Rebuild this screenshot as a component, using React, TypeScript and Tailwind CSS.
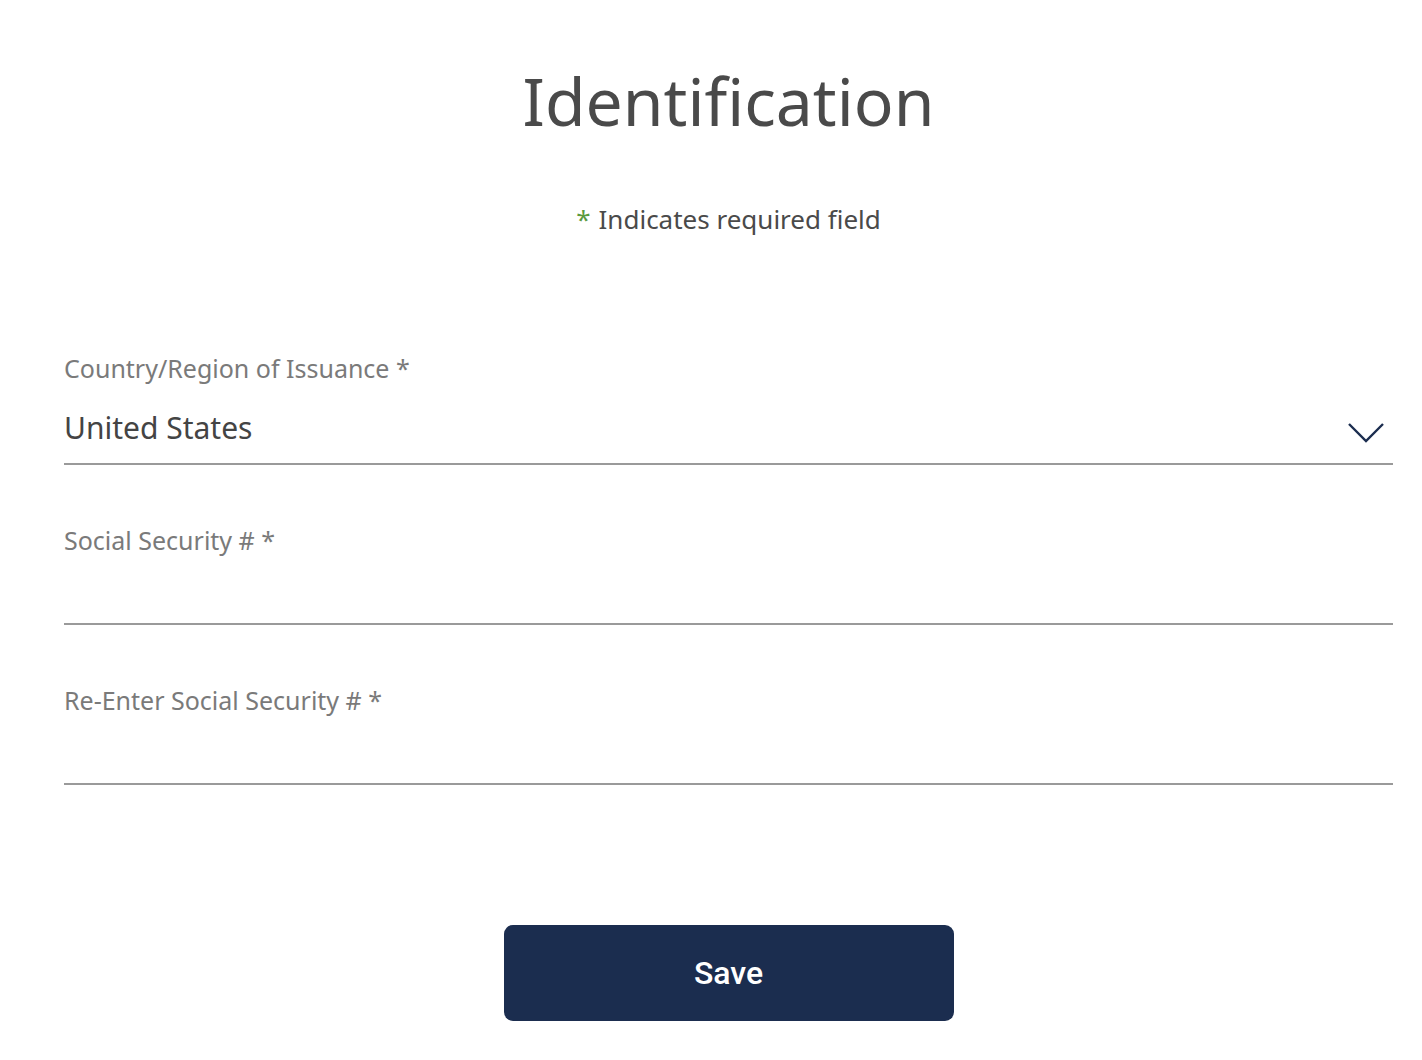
import React from 'react';

const font = { fontFamily: '"Noto Sans", "Open Sans", sans-serif' };

const Field: React.FC<{ label: string; value?: string; select?: boolean }> = ({ label, value, select }) => (
  <div className="border-b-2 border-[#9a9a9a]">
    <label className="block text-[25px] leading-[34px] text-[#7a7a7a]">{label}</label>
    <div className={`flex items-center justify-between pt-[6px] ${select ? 'h-[78px]' : 'h-[66px]'}`}>
      <span className="text-[30px] text-[#444444]">{value}</span>
      {select && (
        <svg width="38" height="22" viewBox="0 0 38 22" className="mr-[8px] mt-[12px]">
          <path d="M2 2 L19 19 L36 2" fill="none" stroke="#1b2d4f" strokeWidth="2.4" />
        </svg>
      )}
    </div>
  </div>
);

export default function App() {
  return (
    <div className="min-h-screen bg-white" style={font}>
      <div className="pl-[64px] pr-[29px] pt-[52px]">
        <h1 className="text-center text-[66px] leading-[96px] text-[#4a4a4a]">Identification</h1>
        <p className="mt-[52px] text-center text-[26px] text-[#4a4a4a]">
          <span className="text-[#5a9a3e] mr-[8px]">*</span>Indicates required field
        </p>
        <div className="mt-[112px] flex flex-col gap-[58px]">
          <Field label="Country/Region of Issuance *" value="United States" select />
          <Field label="Social Security # *" />
          <Field label="Re-Enter Social Security # *" />
        </div>
        <div className="mt-[140px] flex justify-center">
          <button className="w-[450px] h-[96px] rounded-[9px] bg-[#1b2d4f] text-white text-[32px] font-medium" style={{ fontFamily: 'Roboto, sans-serif' }}>
            Save
          </button>
        </div>
      </div>
    </div>
  );
}
